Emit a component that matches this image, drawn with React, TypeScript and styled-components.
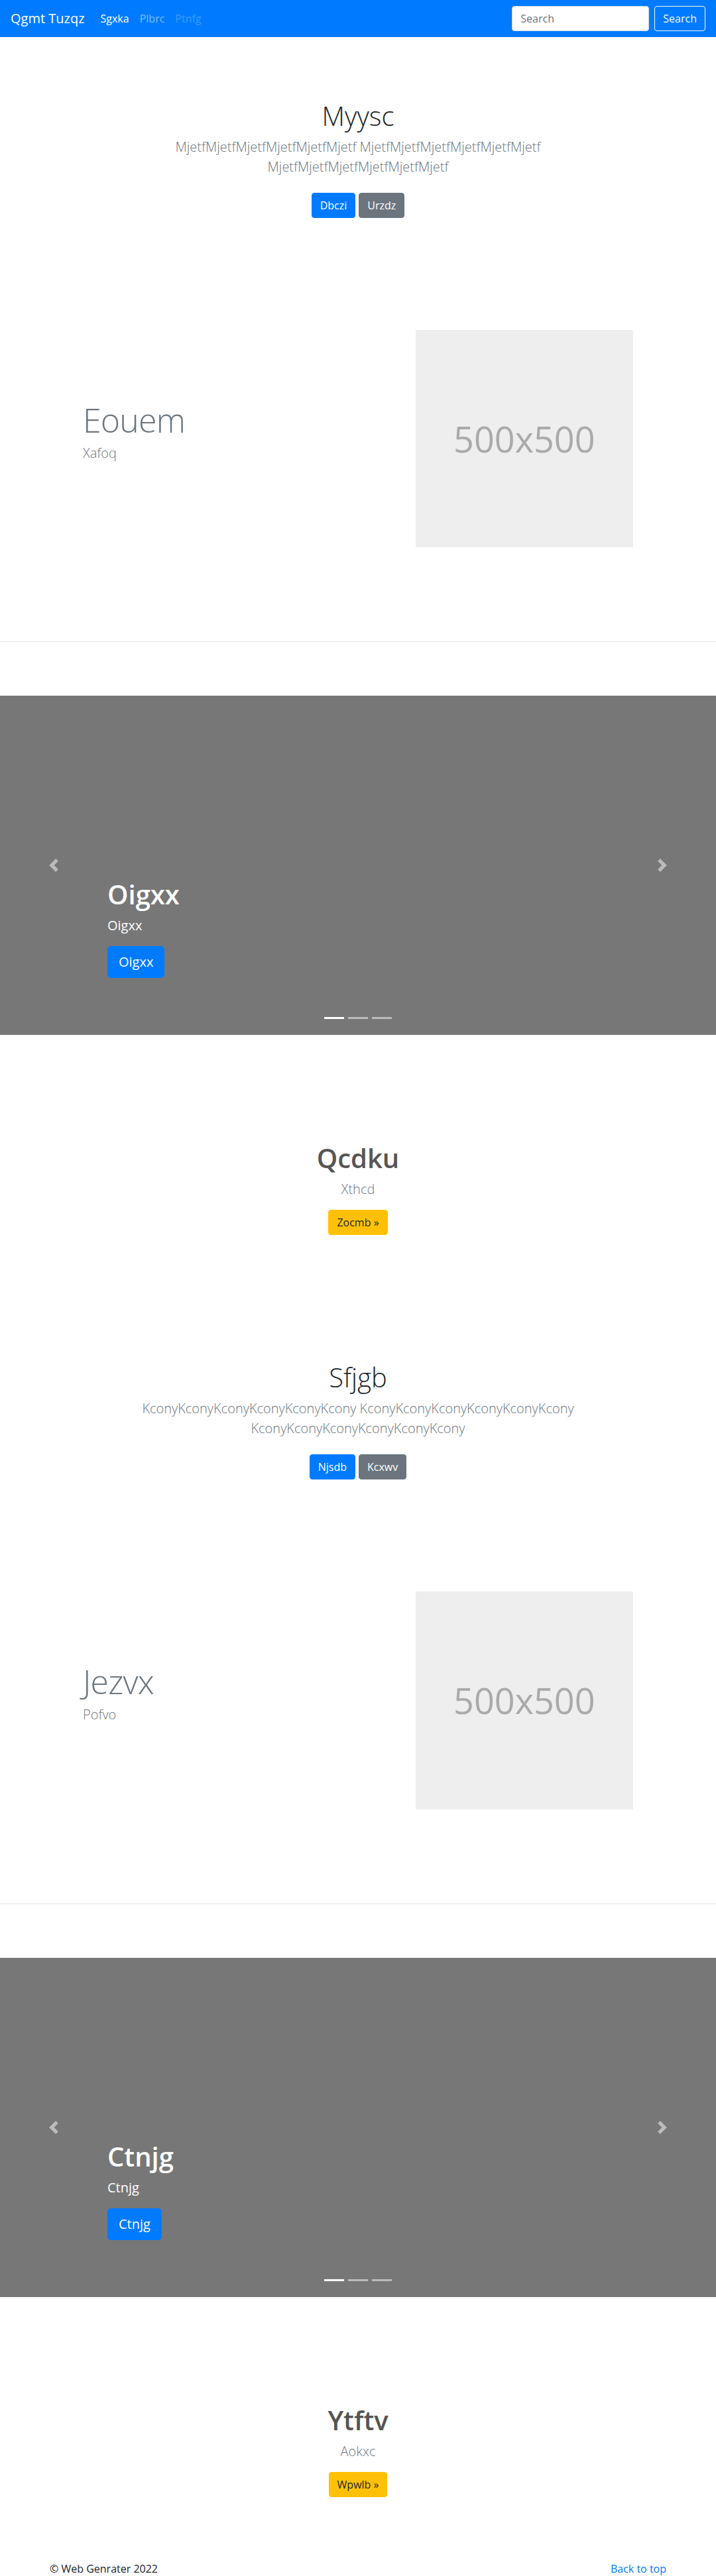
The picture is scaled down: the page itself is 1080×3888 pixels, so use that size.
import React from 'react';
import styled, { createGlobalStyle } from 'styled-components';

const GlobalStyle = createGlobalStyle`
  *, *::before, *::after {
    box-sizing: border-box;
  }
  body {
    margin: 0;
    font-family: "Segoe UI", "Open Sans", "Noto Sans", Arial, sans-serif;
    font-size: 16px;
    line-height: 1.5;
    color: #212529;
    background-color: #fff;
  }
  h1, h2, p {
    margin: 0;
  }
`;

type Variant = 'primary' | 'secondary' | 'warning' | 'outlineLight';

const variants: Record<Variant, string> = {
  primary: 'background-color: #007bff; border-color: #007bff; color: #fff;',
  secondary: 'background-color: #6c757d; border-color: #6c757d; color: #fff;',
  warning: 'background-color: #ffc107; border-color: #ffc107; color: #212529;',
  outlineLight: 'background-color: transparent; border-color: #f8f9fa; color: #f8f9fa;',
};

const Button = styled.a<{ $variant: Variant; $lg?: boolean }>`
  display: inline-block;
  padding: ${p => (p.$lg ? '8px 16px' : '6px 12px')};
  font-size: ${p => (p.$lg ? '20px' : '16px')};
  font-weight: 400;
  line-height: 1.5;
  border: 1px solid transparent;
  border-radius: ${p => (p.$lg ? '5px' : '4px')};
  text-decoration: none;
  white-space: nowrap;
  cursor: pointer;
  ${p => variants[p.$variant]}
`;

/* navbar */

const Navbar = styled.nav`
  display: flex;
  align-items: center;
  height: 56px;
  padding: 8px 16px;
  background-color: #007bff;
`;

const Brand = styled.a`
  padding: 5px 0;
  margin-right: 16px;
  font-size: 20px;
  line-height: 30px;
  color: #fff;
  text-decoration: none;
  white-space: nowrap;
`;

const NavList = styled.ul`
  display: flex;
  margin: 0 auto 0 0;
  padding: 0;
  list-style: none;
`;

type LinkState = 'active' | 'idle' | 'disabled';

const linkColors: Record<LinkState, string> = {
  active: '#fff',
  idle: 'rgba(255, 255, 255, 0.5)',
  disabled: 'rgba(255, 255, 255, 0.25)',
};

const NavLink = styled.a<{ $state: LinkState }>`
  display: block;
  padding: 8px;
  color: ${p => linkColors[p.$state]};
  text-decoration: none;
`;

const SearchForm = styled.form`
  display: flex;
  align-items: center;
  gap: 8px;
`;

const SearchInput = styled.input`
  width: 207px;
  height: 38px;
  padding: 6px 12px;
  font-family: inherit;
  font-size: 16px;
  color: #495057;
  background-color: #fff;
  border: 1px solid #ced4da;
  border-radius: 4px;
  &::placeholder {
    color: #6c757d;
  }
`;

/* jumbotron */

const Jumbotron = styled.section`
  padding-top: 95px;
  text-align: center;
`;

const JumboInner = styled.div`
  max-width: 700px;
  margin: 0 auto;
  padding: 0 15px;
`;

const JumboTitle = styled.h1`
  margin-bottom: 8px;
  font-size: 40px;
  font-weight: 300;
  line-height: 1.2;
  color: #212529;
`;

const Lead = styled.p`
  margin-bottom: 16px;
  font-size: 20px;
  font-weight: 300;
  line-height: 1.5;
  color: #6c757d;
`;

// padding instead of margin so the gaps do not collapse into the lead's margin
const ButtonRow = styled.div`
  display: flex;
  justify-content: center;
  gap: 5px;
  padding: 8px 0;
`;

/* featurette */

const FeatureRow = styled.div`
  display: flex;
  align-items: center;
  width: 860px;
  margin: 161px auto 0;
`;

const FeatureText = styled.div`
  flex: 0 0 58.3333%;
  padding: 0 15px;
`;

const FeatureMedia = styled.div`
  flex: 0 0 41.6667%;
  padding: 0 15px;
`;

const FeatureHeading = styled.h2`
  margin-bottom: 10px;
  font-size: 50px;
  font-weight: 300;
  line-height: 1;
  letter-spacing: -0.8px;
  color: #6c757d;
`;

const Placeholder = styled.div`
  display: flex;
  align-items: center;
  justify-content: center;
  aspect-ratio: 1;
  background-color: #eee;
  font-size: 54px;
  color: #aaa;
`;

const Divider = styled.hr`
  margin: 142px 0 81px;
  border: 0;
  border-top: 1px solid rgba(0, 0, 0, 0.1);
`;

/* carousel */

const Carousel = styled.div`
  position: relative;
  height: 512px;
  background-color: #777;
`;

const Caption = styled.div`
  position: absolute;
  left: 15%;
  right: 15%;
  bottom: 50px;
  z-index: 10;
  padding: 20px 0;
  color: #fff;
  text-align: left;
`;

const CaptionTitle = styled.h1`
  margin-bottom: 8px;
  font-size: 40px;
  font-weight: 600;
  line-height: 1.2;
`;

const CaptionText = styled.p`
  margin-bottom: 16px;
  font-size: 20px;
  line-height: 1.5;
`;

const CaptionAction = styled.div`
  display: flex;
  margin-bottom: 16px;
`;

const Control = styled.a<{ $side: 'left' | 'right' }>`
  position: absolute;
  top: 0;
  bottom: 0;
  ${p => p.$side}: 0;
  width: 15%;
  display: flex;
  align-items: center;
  justify-content: center;
  opacity: 0.5;
  color: #fff;
`;

const Indicators = styled.ol`
  position: absolute;
  left: 0;
  right: 0;
  bottom: 24px;
  display: flex;
  justify-content: center;
  gap: 6px;
  margin: 0;
  padding: 0;
  list-style: none;
`;

const Indicator = styled.li<{ $active?: boolean }>`
  width: 30px;
  height: 3px;
  background-color: #fff;
  opacity: ${p => (p.$active ? 1 : 0.5)};
`;

/* marketing */

const Marketing = styled.section`
  padding: 162px 0 96px;
  text-align: center;
`;

const MarketingTitle = styled.h2`
  margin-bottom: 8px;
  font-size: 40px;
  font-weight: 600;
  line-height: 1.2;
  color: #555;
`;

/* footer */

const Footer = styled.footer`
  display: flex;
  justify-content: space-between;
  max-width: 960px;
  margin: 0 auto;
  padding: 0 15px;
`;

const FooterText = styled.p`
  margin-bottom: 16px;
`;

const FooterLink = styled.a`
  color: #007bff;
  text-decoration: none;
`;

const Chevron = ({ dir }: { dir: 'prev' | 'next' }) => (
  <svg width="20" height="20" viewBox="0 0 8 8" fill="currentColor">
    <path
      d={
        dir === 'prev'
          ? 'M5.25 0l-4 4 4 4 1.5-1.5L4.25 4l2.5-2.5L5.25 0z'
          : 'M2.75 0l-1.5 1.5L3.75 4l-2.5 2.5L2.75 8l4-4-4-4z'
      }
    />
  </svg>
);

type Group = {
  title: string;
  lead: string;
  actions: [string, string];
  feature: [string, string];
  slide: string;
  market: [string, string, string];
};

const groups: Group[] = [
  {
    title: 'Myysc',
    lead: Array(3).fill('Mjetf'.repeat(6)).join(' '),
    actions: ['Dbczi', 'Urzdz'],
    feature: ['Eouem', 'Xafoq'],
    slide: 'Oigxx',
    market: ['Qcdku', 'Xthcd', 'Zocmb »'],
  },
  {
    title: 'Sfjgb',
    lead: Array(3).fill('Kcony'.repeat(6)).join(' '),
    actions: ['Njsdb', 'Kcxwv'],
    feature: ['Jezvx', 'Pofvo'],
    slide: 'Ctnjg',
    market: ['Ytftv', 'Aokxc', 'Wpwlb »'],
  },
];

const PageGroup = ({ g }: { g: Group }) => (
  <>
    <Jumbotron>
      <JumboInner>
        <JumboTitle>{g.title}</JumboTitle>
        <Lead>{g.lead}</Lead>
        <ButtonRow>
          <Button $variant="primary">{g.actions[0]}</Button>
          <Button $variant="secondary">{g.actions[1]}</Button>
        </ButtonRow>
      </JumboInner>
    </Jumbotron>

    <FeatureRow>
      <FeatureText>
        <FeatureHeading>{g.feature[0]}</FeatureHeading>
        <Lead>{g.feature[1]}</Lead>
      </FeatureText>
      <FeatureMedia>
        <Placeholder>500x500</Placeholder>
      </FeatureMedia>
    </FeatureRow>

    <Divider />

    <Carousel>
      <Indicators>
        <Indicator $active />
        <Indicator />
        <Indicator />
      </Indicators>
      <Caption>
        <CaptionTitle>{g.slide}</CaptionTitle>
        <CaptionText>{g.slide}</CaptionText>
        <CaptionAction>
          <Button $variant="primary" $lg>
            {g.slide}
          </Button>
        </CaptionAction>
      </Caption>
      <Control $side="left">
        <Chevron dir="prev" />
      </Control>
      <Control $side="right">
        <Chevron dir="next" />
      </Control>
    </Carousel>

    <Marketing>
      <MarketingTitle>{g.market[0]}</MarketingTitle>
      <Lead>{g.market[1]}</Lead>
      <div>
        <Button $variant="warning">{g.market[2]}</Button>
      </div>
    </Marketing>
  </>
);

const App = () => (
  <>
    <GlobalStyle />
    <Navbar>
      <Brand href="#">Qgmt Tuzqz</Brand>
      <NavList>
        <li>
          <NavLink $state="active" href="#">Sgxka</NavLink>
        </li>
        <li>
          <NavLink $state="idle" href="#">Plbrc</NavLink>
        </li>
        <li>
          <NavLink $state="disabled">Ptnfg</NavLink>
        </li>
      </NavList>
      <SearchForm onSubmit={e => e.preventDefault()}>
        <SearchInput type="text" placeholder="Search" />
        <Button $variant="outlineLight">Search</Button>
      </SearchForm>
    </Navbar>

    <main>
      {groups.map(g => (
        <PageGroup key={g.title} g={g} />
      ))}
    </main>

    <Footer>
      <FooterText>© Web Genrater 2022</FooterText>
      <FooterText>
        <FooterLink href="#">Back to top</FooterLink>
      </FooterText>
    </Footer>
  </>
);

export default App;
